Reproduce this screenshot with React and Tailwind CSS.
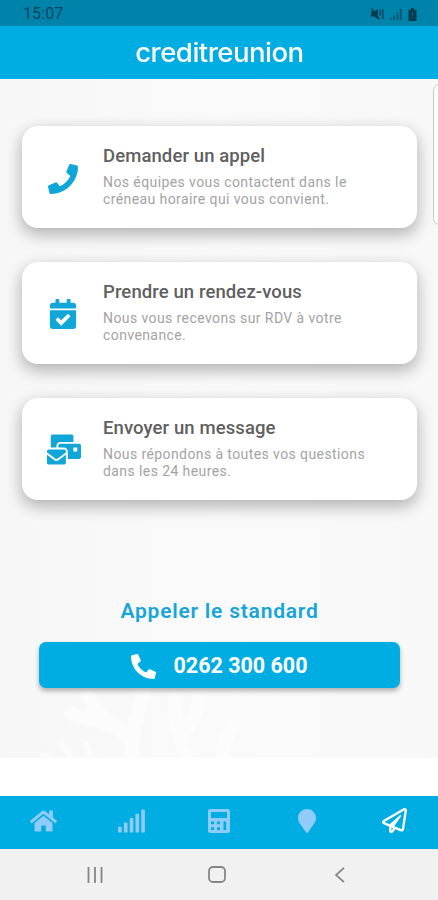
import React from "react";
import {
  FaPhone,
  FaPhoneAlt,
  FaCalendarCheck,
  FaMailBulk,
  FaHome,
  FaSignal,
  FaMapMarker,
  FaRegPaperPlane,
} from "react-icons/fa";

const contacts = [
  {
    icon: <FaPhone className="mb-px size-[30px]" />,
    title: "Demander un appel",
    lines: ["Nos équipes vous contactent dans le", "créneau horaire qui vous convient."],
  },
  {
    icon: <FaCalendarCheck className="mb-[2px] size-[30px]" />,
    title: "Prendre un rendez-vous",
    lines: ["Nous vous recevons sur RDV à votre", "convenance."],
  },
  {
    icon: <FaMailBulk className="mb-[3px] ml-[3px] h-[31px] w-[34px]" />,
    title: "Envoyer un message",
    lines: ["Nous répondons à toutes vos questions", "dans les 24 heures."],
  },
];

function StatusBar() {
  return (
    <div className="flex h-[26px] items-center justify-between bg-[#0083ab] pr-[21px] pl-[23px] pt-0.5 text-[#06465f]">
      <span className="text-[16px] leading-none tracking-[0.1px]">15:07</span>
      <div className="flex items-center gap-[6px]">
        {/* muted speaker */}
        <svg className="h-3 w-[13px]" viewBox="0 0 13 12" fill="none">
          <path d="M0 3.500h3L7 1v10L3 8.500H0z" fill="#063d52" />
          <path d="M.5 .5l8 11M9.300 1.500v6M11.800 1v10" stroke="#063d52" strokeWidth="1.300" />
        </svg>
        <svg className="h-3 w-3" viewBox="0 0 12 12" fill="#06536e">
          <path d="M0 10h1.5v2H0zM3.2 7.5h1.6V12H3.2zM6.5 4.5h1.7V12H6.5zM9.8 1h1.8v11H9.8z" />
        </svg>
        <svg className="h-[13px] w-[9px]" viewBox="0 0 9 13" fill="#063d52">
          <path d="M3 0h3v1.7h2.5V13h-8V1.7H3z" />
          <path d="M4 4h1v4H4zM4 9h1v1H4z" fill="#0b5e79" />
        </svg>
      </div>
    </div>
  );
}

function Coral() {
  return (
    <svg
      className="absolute bottom-0 left-0 h-[100px] w-full blur-[1.5px]"
      viewBox="0 0 438 100"
      fill="none"
      stroke="#fcfcfc"
      strokeLinecap="round"
      strokeLinejoin="round"
    >
      <path d="M134 108c-4-20-2-34 10-76M132 84c-12-14-34-24-44-46M104 66c-14-6-22-6-32-10M186 108c-2-24-12-32-12-66M182 76c10-12 14-18 16-32M222 104c0-14 2-22 12-36" strokeWidth="14" />
      <path d="M74 108c-5-16-8-16-12-22M92 104c-2-12-4-14-6-18M50 100l-8-3" strokeWidth="6" />
    </svg>
  );
}

function ContactCard({ icon, title, lines }) {
  return (
    <button className="flex h-[102px] w-full items-start rounded-[16px] bg-white text-left shadow-[0_6px_16px_1px_rgba(0,0,0,0.28)]">
      <span className="flex h-full w-[81px] items-center justify-center pt-1 text-[#10a6d8]">{icon}</span>
      <span className="flex flex-col pt-[18px]">
        <span className="text-[18.5px] leading-6 font-medium tracking-[0.1px] text-[#5f5f5f]">{title}</span>
        <span className="mt-[6px] text-[14px] leading-[17px] tracking-[0.41px] text-[#a3a3a3]">
          {lines.map((line) => (
            <span key={line} className="block whitespace-nowrap">
              {line}
            </span>
          ))}
        </span>
      </span>
    </button>
  );
}

function CalculatorIcon() {
  return (
    <svg className="h-6 w-[22px]" viewBox="0 0 22 24" fill="currentColor">
      <path
        fillRule="evenodd"
        d="M2.500 0h17A2.500 2.500 0 0 1 22 2.500v19a2.500 2.500 0 0 1-2.500 2.500h-17A2.500 2.500 0 0 1 0 21.500v-19A2.500 2.500 0 0 1 2.500 0zM3 3v6h16V3zM3 12.500v2.700h3v-2.700zM9 12.500v2.700h3v-2.700zM3 18.300V21h3v-2.700zM9 18.300V21h3v-2.700zM15.500 12.500V21h2.700v-8.500z"
      />
    </svg>
  );
}

function TabBar() {
  return (
    <nav className="grid h-[53px] grid-cols-5 items-center justify-items-center bg-[#00ade2] pb-1 text-[#8fccfb]">
      <FaHome className="h-6 w-[27px]" />
      <FaSignal className="h-6 w-[29px]" />
      <CalculatorIcon />
      <FaMapMarker className="h-6 w-[18px]" />
      <FaRegPaperPlane className="size-[25px] text-white" />
    </nav>
  );
}

function SystemBar() {
  return (
    <div className="flex h-[51px] items-center bg-[#f1f1f1] pl-[87px] text-[#858585]">
      <svg className="h-4 w-4" viewBox="0 0 16 16" stroke="currentColor" strokeWidth="1.8">
        <path d="M1.500 0v16M8 0v16M14.500 0v16" />
      </svg>
      <svg className="ml-[105px] h-[17px] w-[18px]" viewBox="0 0 18 17" fill="none" stroke="currentColor" strokeWidth="1.8">
        <rect x="1" y="1" width="16" height="15" rx="4" />
      </svg>
      <svg className="ml-[109px] h-4 w-[10px]" viewBox="0 0 10 16" fill="none" stroke="currentColor" strokeWidth="1.8">
        <path d="M9 .8L1 8l8 7.200" />
      </svg>
    </div>
  );
}

export default function App() {
  return (
    <div className="relative flex h-[900px] w-[438px] flex-col overflow-hidden bg-white font-['Roboto',sans-serif]">
      <StatusBar />
      <header className="flex h-[53px] items-center justify-center bg-[#00ade2] pt-px">
        <h1 className="origin-center scale-x-[1.06] font-['Inter',sans-serif] text-[26px] leading-none font-medium tracking-[-0.5px] text-white">
          creditreunion
        </h1>
      </header>

      <main className="relative h-[679px] overflow-hidden bg-linear-to-r from-[#f7f7f7] via-[#fafafa] to-[#f8f8f8]">
        <Coral />
        <div className="relative flex flex-col pr-[21px] pl-[22px] pt-[47px]">
          <div className="flex flex-col gap-[34px]">
            {contacts.map((c) => (
              <ContactCard key={c.title} {...c} />
            ))}
          </div>
          <h2 className="mt-[99px] text-center text-[21px] leading-6 font-semibold tracking-[0.78px] text-[#17a5d8]">
            Appeler le standard
          </h2>
          <button className="mx-[17px] mt-[19px] flex h-[46px] items-center justify-center gap-[17px] rounded-[7px] bg-[#00ade2] text-white shadow-[0_3px_5px_rgba(0,0,0,0.3)]">
            <FaPhoneAlt className="mt-0.5 size-[25px]" />
            <span className="pt-0.5 text-[21.5px] leading-none font-bold">0262 300 600</span>
          </button>
        </div>
      </main>

      <div className="h-[38px] bg-white" />
      <TabBar />
      <SystemBar />

      {/* edge panel handle */}
      <div className="absolute top-[84px] -right-2 h-[141px] w-[13px] rounded-[7px] border-[1.5px] border-[#c9c9c9] bg-white/80" />
    </div>
  );
}
